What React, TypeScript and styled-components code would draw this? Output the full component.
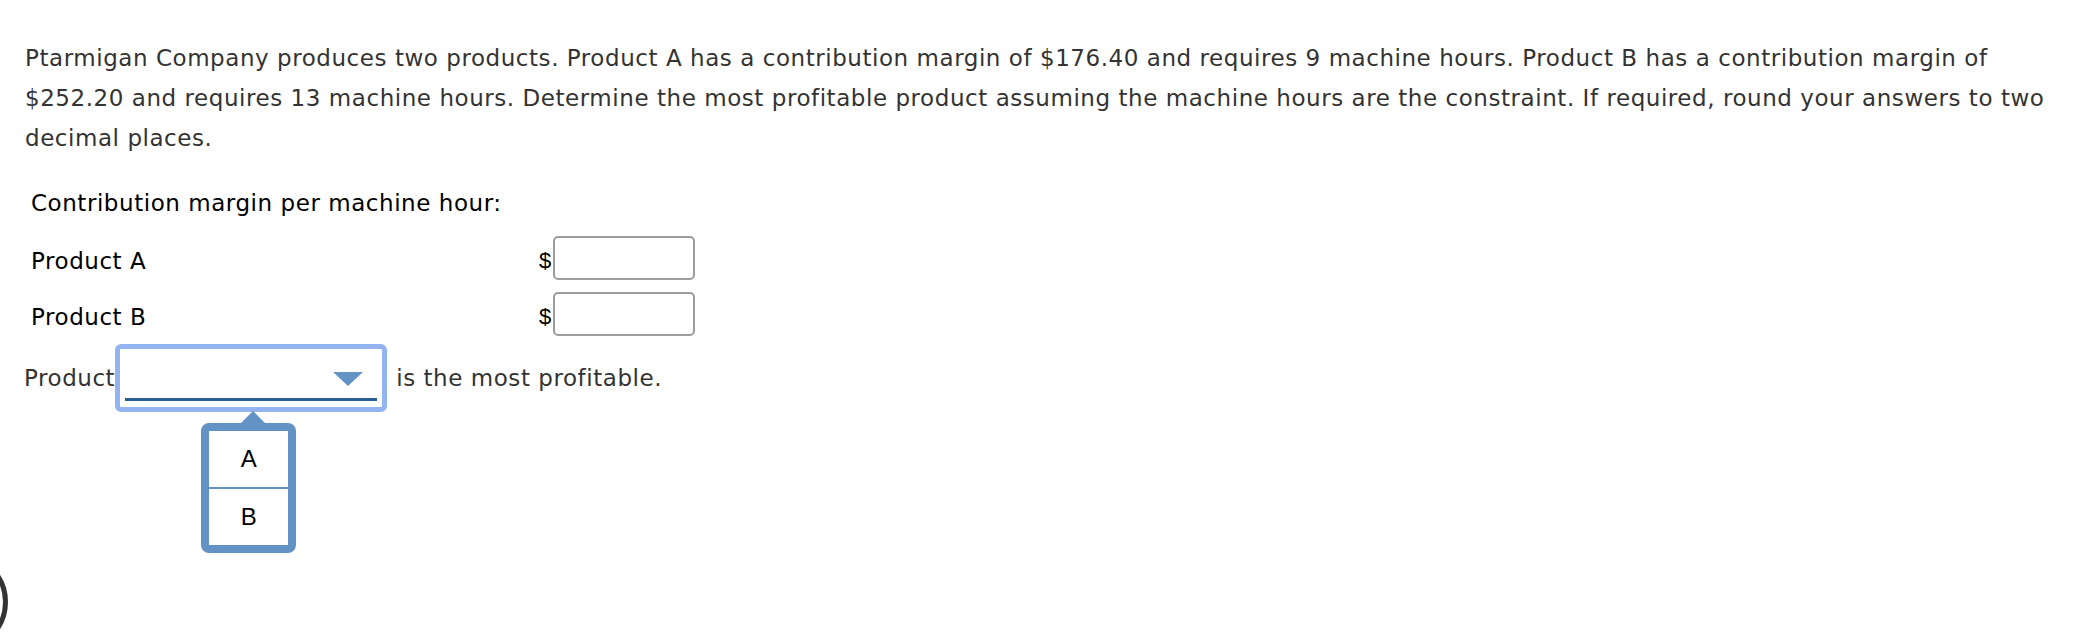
import React from 'react'
import styled, { createGlobalStyle } from 'styled-components'

const GlobalStyle = createGlobalStyle`
  html, body {
    margin: 0;
    padding: 0;
    background: #fff;
  }
  body {
    font-family: "DejaVu Sans", Verdana, sans-serif;
    overflow: hidden;
  }
`

const Page = styled.div`
  position: relative;
  width: 2090px;
  height: 638px;
  padding: 38px 0 0 25px;
  box-sizing: border-box;
  font-size: 23px;
  letter-spacing: 0.55px;
`

const Question = styled.p`
  margin: 0;
  width: 2045px;
  line-height: 40px;
  color: #333;
`

const Table = styled.div`
  margin: 16px 0 0 6px;
  display: flex;
  flex-direction: column;
`

const Row = styled.div`
  height: 58px;
  display: flex;
  align-items: center;
  &:last-child {
    height: 54px;
  }
`

const Label = styled.div`
  width: 508px;
  color: #000;
`

const Dollar = styled.span`
  font-family: "Liberation Sans", Arial, sans-serif;
  font-size: 22px;
  letter-spacing: 0;
  color: #000;
  margin-right: 2px;
`

const AmountInput = styled.input`
  width: 142px;
  height: 44px;
  box-sizing: border-box;
  border: 2px solid #9c9c9c;
  border-radius: 5px;
  background: #fff;
  margin-top: -6px;
`

const AnswerRow = styled.div`
  height: 68px;
  margin-left: -1px;
  display: flex;
  align-items: center;
  color: #333;
`

const Select = styled.div`
  position: relative;
  width: 272px;
  height: 68px;
  box-sizing: border-box;
  border: 5px solid #93b3f1;
  border-radius: 6px;
  margin-right: 9px;
  background: #fff;
`

const Field = styled.div`
  margin: 0 5px;
  height: 52px;
  box-sizing: border-box;
  border-bottom: 3px solid #2b5d91;
  display: flex;
  justify-content: flex-end;
  align-items: flex-end;
  padding: 0 14px 12px 0;
`

const Menu = styled.div`
  position: absolute;
  left: 81px;
  top: 74px;
  width: 95px;
  box-sizing: border-box;
  border: 8px solid #6393c4;
  border-radius: 8px;
  background: #fff;
  &::before {
    content: '';
    position: absolute;
    left: 32px;
    top: -20px;
    border-left: 12px solid transparent;
    border-right: 12px solid transparent;
    border-bottom: 12px solid #6393c4;
  }
`

const Option = styled.div<{ $divider?: boolean }>`
  height: 56px;
  display: flex;
  align-items: center;
  justify-content: center;
  font-family: "Liberation Sans", Arial, sans-serif;
  font-size: 24px;
  letter-spacing: 0;
  color: #000;
  border-top: ${p => (p.$divider ? '2px solid #6393c4' : 'none')};
`

const CornerRing = styled.div`
  position: absolute;
  left: -92px;
  top: 552px;
  width: 100px;
  height: 100px;
  box-sizing: border-box;
  border: 5px solid #333;
  border-radius: 50%;
`

export default function App() {
  return (
    <>
      <GlobalStyle />
      <Page>
        <Question>
          Ptarmigan Company produces two products. Product A has a contribution margin of $176.40 and requires 9
          machine hours. Product B has a contribution margin of $252.20 and requires 13 machine hours. Determine the
          most profitable product assuming the machine hours are the constraint. If required, round your answers to
          two decimal places.
        </Question>

        <Table>
          <Row>
            <Label>Contribution margin per machine hour:</Label>
          </Row>
          <Row>
            <Label>Product A</Label>
            <Dollar>$</Dollar>
            <AmountInput type="text" />
          </Row>
          <Row>
            <Label>Product B</Label>
            <Dollar>$</Dollar>
            <AmountInput type="text" />
          </Row>
        </Table>

        <AnswerRow>
          Product
          <Select>
            <Field>
              <svg width="30" height="14" viewBox="0 0 30 14">
                <polygon points="0,0 30,0 15,14" fill="#6393c4" />
              </svg>
            </Field>
            <Menu>
              <Option>A</Option>
              <Option $divider>B</Option>
            </Menu>
          </Select>
          is the most profitable.
        </AnswerRow>

        <CornerRing />
      </Page>
    </>
  )
}
